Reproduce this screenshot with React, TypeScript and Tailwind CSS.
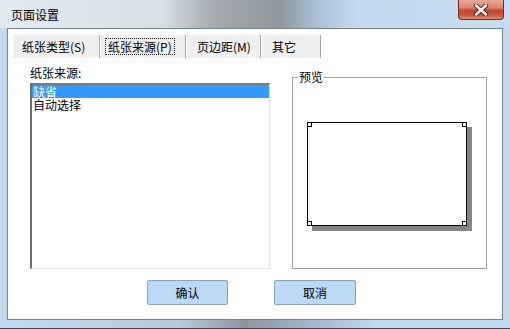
import React from 'react';

const tabs = [
  { label: '纸张类型', key: 'S', w: 'w-[86px]', pl: 'pl-[9px]' },
  { label: '纸张来源', key: 'P', w: 'w-[84px]', pl: 'pl-[4px]', active: true },
  { label: '页边距', key: 'M', w: 'w-[73px]', pl: 'pl-[10px]' },
  { label: '其它', key: '', w: 'w-[58px]', pl: 'pl-[10px]' },
];

const Tab: React.FC<{ label: string; k: string; w: string; pl: string; active?: boolean }> = ({ label, k, w, pl, active }) => (
  <div className="flex items-stretch">
    <div className={`${w} ${pl} h-[23px] bg-[#efefef] flex items-center`}>
      {active ? (
        <span className="border border-dotted border-[#222] px-[2px] h-[17px] flex items-center">
          {label}({k})
        </span>
      ) : (
        <span>
          {label}
          {k && `(${k})`}
        </span>
      )}
    </div>
    <div className="w-[1px] bg-[#a8a8a8]" />
    <div className="w-[1px] bg-white" />
  </div>
);

const PagePreview: React.FC = () => (
  <svg width="166" height="110" viewBox="0 0 166 110">
    <rect x="5" y="5" width="160" height="104" fill="#858585" />
    <rect x="0.5" y="0.5" width="159" height="103" fill="#fff" stroke="#000" />
    <rect x="0.5" y="0.5" width="4" height="4" fill="#fff" stroke="#000" />
    <rect x="155.5" y="0.5" width="4" height="4" fill="#fff" stroke="#000" />
    <rect x="0.5" y="99.5" width="4" height="4" fill="#fff" stroke="#000" />
    <rect x="155.5" y="99.5" width="4" height="4" fill="#fff" stroke="#000" />
  </svg>
);

export default function App() {
  return (
    <div className="w-[510px] h-[329px] flex flex-col bg-[#c3d9ef] border-b border-[#3b4a58] font-['Noto_Sans_CJK_SC','Noto_Sans',sans-serif] text-[12px] text-black leading-[14px] overflow-hidden">
      {/* title bar */}
      <div className="h-[28px] flex items-start bg-[linear-gradient(90deg,#e2eaf2_0%,#d6dee6_32%,#a4aaaf_42%,#8f969c_55%,#a9c0d6_62%,#c2d9ef_70%,#c8ddf2_100%)]">
        <span className="ml-[11px] mt-[8px] text-[12px] leading-[14px]">页面设置</span>
        <div className="ml-auto mr-[6px] w-[46px] h-[20px] rounded-b-[4px] border border-t-0 border-[#6e2d22] bg-[linear-gradient(180deg,#e9a996_0%,#d98572_40%,#c4472f_55%,#c9553c_80%,#e08f75_100%)] flex items-center justify-center">
          <svg width="16" height="12" viewBox="0 0 16 12">
            <path d="M3 1.5 L13 10.5 M13 1.5 L3 10.5" stroke="#5a1d14" strokeWidth="4.5" strokeLinecap="round" />
            <path d="M3 1.5 L13 10.5 M13 1.5 L3 10.5" stroke="#fff" strokeWidth="2.6" strokeLinecap="round" />
          </svg>
        </div>
      </div>

      {/* client area */}
      <div className="mx-[7px] h-[292px] border border-[#6f8499] bg-white flex flex-col">
        <div className="flex pl-[5px] pt-[6px]">
          {tabs.map((t) => (
            <Tab key={t.label} label={t.label} k={t.key} w={t.w} pl={t.pl} active={t.active} />
          ))}
        </div>

        <div className="flex pl-[22px]">
          <div className="w-[240px] flex flex-col">
            <div className="h-[25px] pt-[8px] pl-[0px]">纸张来源:</div>
            <div className="h-[186px] border-t-2 border-l-2 border-r border-b border-t-[#7b7b7b] border-l-[#6e6e6e] border-r-[#e3e3e3] border-b-[#e3e3e3] bg-white">
              <div className="h-[13px] leading-[13px] bg-[#3399ff] text-white pl-[1px]">缺省</div>
              <div className="h-[13px] leading-[13px] pl-[1px]">自动选择</div>
            </div>
          </div>

          <div className="ml-[22px] mt-[19px] w-[195px] h-[192px] border border-[#a0a0a0] relative flex justify-center pt-[44px]">
            <span className="absolute left-[5px] top-[-8px] px-[1px] bg-white leading-[14px]">预览</span>
            <PagePreview />
          </div>
        </div>

        <div className="flex mt-[11px] pl-[139px]">
          <button className="w-[81px] h-[25px] rounded-[2px] border border-[#8aa4bd] bg-[#bcdaf5] text-[12px]">确认</button>
          <button className="ml-[46px] w-[82px] h-[25px] rounded-[2px] border border-[#8aa4bd] bg-[#bcdaf5] text-[12px]">取消</button>
        </div>
      </div>

      <div className="flex-1 mx-[7px] bg-[linear-gradient(90deg,#c3d9ef_0%,#b9c9d8_35%,#8e959c_48%,#9fb3c6_60%,#c3d9ef_75%)]" />
    </div>
  );
}
